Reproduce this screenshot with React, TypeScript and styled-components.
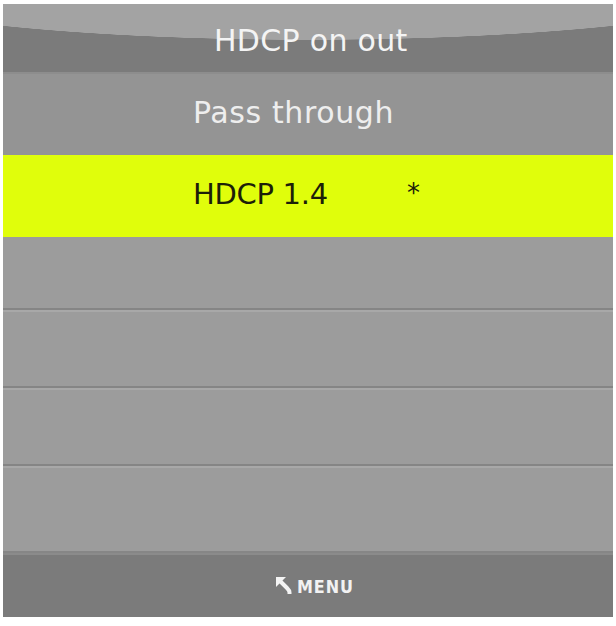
import React from 'react';
import styled, { createGlobalStyle } from 'styled-components';

const GlobalStyle = createGlobalStyle`
  html, body {
    margin: 0;
    padding: 0;
    background: #ffffff;
  }
`;

interface OptionItem {
  label: string;
  selected?: boolean;
  current?: boolean;
  divider?: boolean;
}

const OPTIONS: OptionItem[] = [
  { label: 'Pass through' },
  { label: 'HDCP 1.4', selected: true, current: true },
  { label: '' },
  { label: '', divider: true },
  { label: '', divider: true },
  { label: '', divider: true },
];

const BackIcon: React.FC = () => (
  <svg width="17" height="17" viewBox="0 0 17 17" aria-hidden="true">
    <path d="M0 0 L10 0 L0 10 Z" fill="#f4f4f4" />
    <path
      d="M3 3 L11 11 Q13.5 13.5 13.5 15.5 L13.5 17"
      stroke="#f4f4f4"
      strokeWidth="4"
      fill="none"
    />
  </svg>
);

export default function App() {
  return (
    <Screen>
      <GlobalStyle />
      <Panel>
        <TitleBar>HDCP on out</TitleBar>
        {OPTIONS.map((item, i) => (
          <Option key={i} $selected={item.selected} $divider={item.divider} $dim={i === 0}>
            {item.label && <Label $tight={item.selected}>{item.label}</Label>}
            {item.current && <Mark>*</Mark>}
          </Option>
        ))}
        <Footer>
          <BackIcon />
          <FooterText>MENU</FooterText>
        </Footer>
      </Panel>
    </Screen>
  );
}

const Screen = styled.div`
  box-sizing: border-box;
  width: 616px;
  padding: 4px 3px 9px 3px;
`;

const Panel = styled.div`
  display: grid;
  grid-template-rows: 70px 81px 82px 71px 78px 78px 87px 66px;
  height: 613px;
  background: #9c9c9c;
  font-family: 'DejaVu Sans', 'Liberation Sans', sans-serif;
  box-shadow: inset 2px 0 0 rgba(255, 255, 255, 0.08);
`;

const TitleBar = styled.div`
  display: flex;
  align-items: center;
  padding-left: 211px;
  padding-top: 2px;
  background:
    radial-gradient(ellipse 500px 67px at 50% -31px, #a3a3a3 99.4%, #7b7b7b 100%);
  box-shadow: inset 0 -2px 0 #8d8d8d;
  color: #f4f4f4;
  font-size: 30px;
  letter-spacing: 0.3px;
`;

const Option = styled.div<{ $selected?: boolean; $divider?: boolean; $dim?: boolean }>`
  display: flex;
  align-items: center;
  padding-left: 190px;
  font-size: 30px;
  background: ${(p) => (p.$selected ? '#e0fe0b' : p.$dim ? '#949494' : '#9c9c9c')};
  color: ${(p) => (p.$selected ? '#1c1f08' : '#eeeeee')};
  ${(p) =>
    p.$divider &&
    `
    border-top: 2px solid #858585;
    box-shadow: inset 0 2px 0 #a8a8a8;
  `}
`;

const Label = styled.span<{ $tight?: boolean }>`
  width: 214px;
  font-size: ${(p) => (p.$tight ? '29px' : '30px')};
  letter-spacing: ${(p) => (p.$tight ? '-0.3px' : '0.6px')};
  position: relative;
  top: -2px;
`;

const Mark = styled.span`
  font-size: 26px;
  position: relative;
  top: -3px;
`;

const Footer = styled.div`
  display: flex;
  align-items: center;
  justify-content: center;
  gap: 4px;
  padding-left: 14px;
  background: #7b7b7b;
  border-top: 2px solid #868686;
  box-shadow: inset 0 2px 0 #8b8b8b;
`;

const FooterText = styled.span`
  color: #f2f2f2;
  font-size: 16px;
  font-weight: bold;
  letter-spacing: 1px;
  margin-top: 3px;
  transform: scaleY(1.12);
`;
